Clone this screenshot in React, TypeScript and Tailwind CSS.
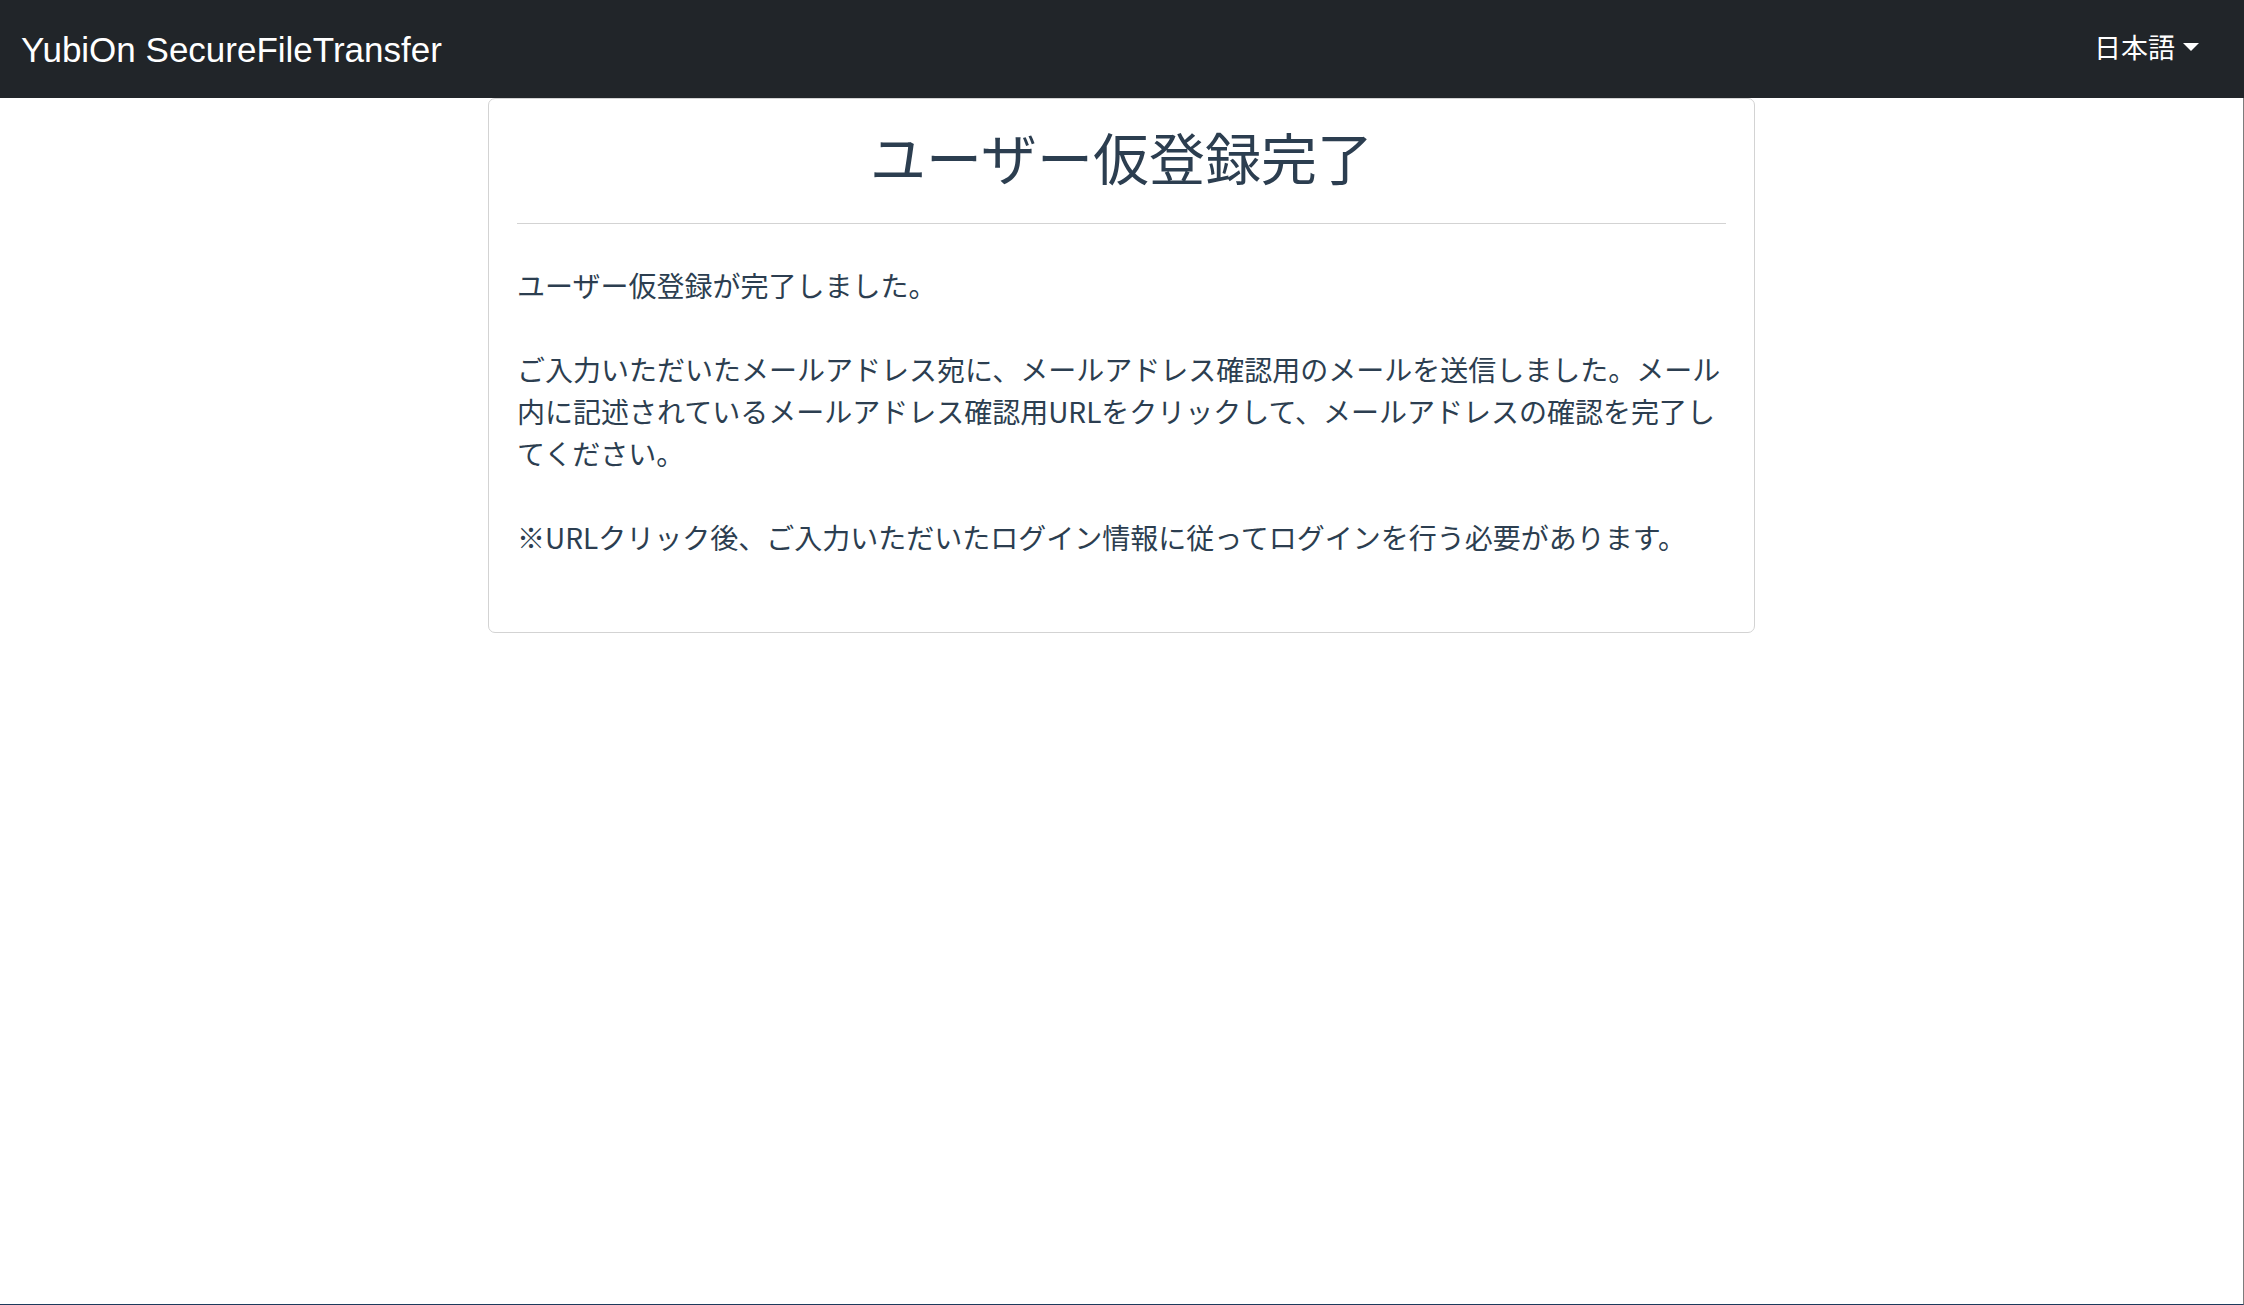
import React from "react";

export default function App() {
  return (
    <div className="w-[2244px] h-[1305px] bg-white overflow-hidden">
      <nav className="h-[98px] bg-[#212529] flex items-center justify-between pl-[21px] pr-[45px]">
        <span
          className="text-white text-[35px] leading-none"
          style={{ fontFamily: '"Liberation Sans", Arial, sans-serif' }}
        >
          YubiOn SecureFileTransfer
        </span>
        <div
          className="flex items-center text-white text-[27px] leading-none pb-[5px]"
          style={{ fontFamily: '"Noto Sans CJK JP", sans-serif' }}
        >
          <span>日本語</span>
          <span className="ml-[8px] w-0 h-0 border-l-[8px] border-r-[8px] border-t-[8px] border-l-transparent border-r-transparent border-t-white" />
        </div>
      </nav>
      <div className="h-[1207px] border-r border-r-[#7c7c7c] border-b border-b-[#1e3a5c]">
        <div
          className="w-[1267px] mx-auto border border-[#d3d3d3] rounded-[7px] px-[28px] pt-[23px] pb-[74px] text-[#2c3e50]"
          style={{ fontFamily: '"Noto Sans CJK JP", sans-serif' }}
        >
          <h2 className="text-center text-[56px] leading-[67px] font-normal">ユーザー仮登録完了</h2>
          <hr className="mt-[34px] border-0 border-t border-t-[#d3d3d3]" />
          <p className="mt-[40px] text-[28px] leading-[42px]">
            ユーザー仮登録が完了しました。
            <br />
            <br />
            ご入力いただいたメールアドレス宛に、メールアドレス確認用のメールを送信しました。メール内に記述されているメールアドレス確認用URLをクリックして、メールアドレスの確認を完了してください。
            <br />
            <br />
            ※URLクリック後、ご入力いただいたログイン情報に従ってログインを行う必要があります。
          </p>
        </div>
      </div>
    </div>
  );
}
